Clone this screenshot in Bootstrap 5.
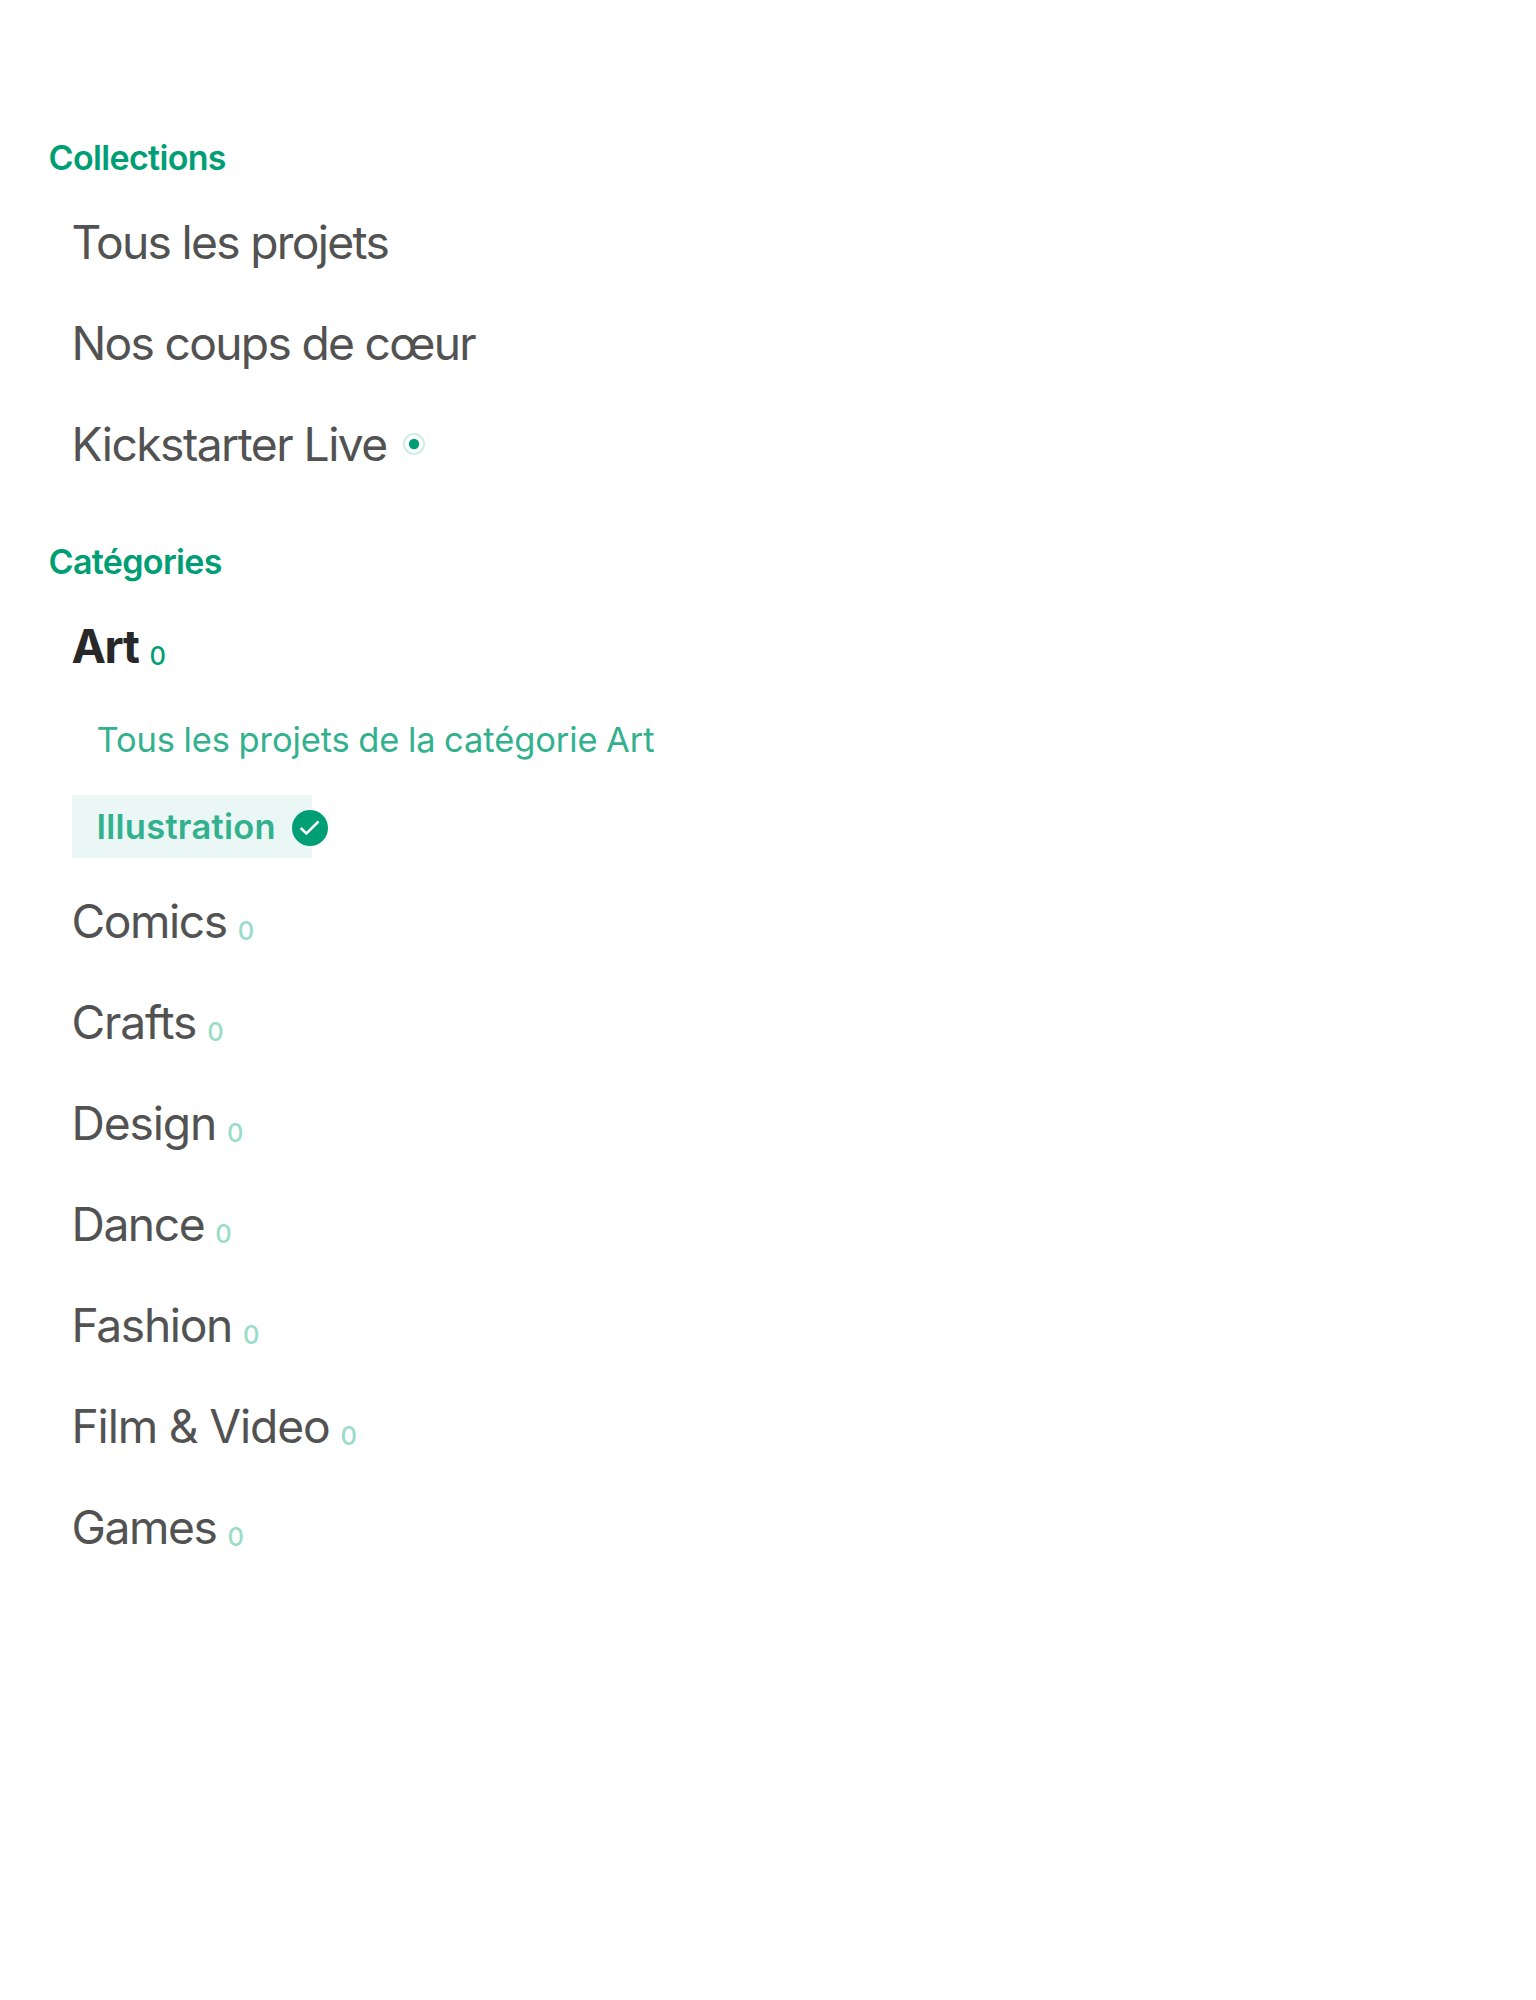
<!DOCTYPE html>
<html lang="fr">
<head>
<meta charset="utf-8">
<title>Collections</title>
<link href="https://cdn.jsdelivr.net/npm/bootstrap@5.3.0/dist/css/bootstrap.min.css" rel="stylesheet">
<style>
body { font-family: Inter, "Liberation Sans", sans-serif; color: #525252; background: #fff; }
.menu-panel { padding: 136px 48px 0 48.5px; }
.section-title { font-size: 34px; line-height: 44px; font-weight: 600; color: #009e74; margin-bottom: 12px; letter-spacing: -.65px; }
.menu-list { padding-left: 23.5px; }
.collections { padding-bottom: 45px; }
.collections .menu-item { letter-spacing: -1.7px; }
.collections .live-item { letter-spacing: -1.53px; }
.menu-item { height: 101px; font-size: 46.2px; line-height: 101px; letter-spacing: -1.35px; white-space: nowrap; text-indent: -.5px; }
.menu-item.tight { letter-spacing: -1.45px; }
.menu-item.airy { letter-spacing: -1.15px; }
.menu-item.chosen { font-weight: 700; color: #282828; letter-spacing: -1.4px; }
.count { font-size: 25.5px; font-weight: 500; line-height: 1; color: #99dcc8; letter-spacing: 0; margin-left: 11px; position: relative; top: 2px; }
.chosen .count { color: #009e74; }
.live-dot { margin: 0 0 2px 16px; }
.sub-list { padding: 11px 0 13px; gap: 24px; }
.sub-item { height: 63px; padding-left: 24.5px; font-size: 34.5px; line-height: 63px; color: #33b18f; letter-spacing: -.1px; word-spacing: -1px; white-space: nowrap; }
.sub-item.picked { width: 240px; font-weight: 600; background: #ebf7f5; letter-spacing: .25px; gap: 16.5px; }
.check-icon { margin-top: 2px; }
</style>
<script src="https://cdn.jsdelivr.net/npm/bootstrap@5.3.0/dist/js/bootstrap.bundle.min.js"></script>
</head>
<body>
<nav class="menu-panel">
  <h2 class="section-title">Collections</h2>
  <ul class="list-unstyled menu-list collections mb-0">
    <li class="menu-item">Tous les projets</li>
    <li class="menu-item">Nos coups de cœur</li>
    <li class="menu-item live-item d-flex align-items-center"><span>Kickstarter Live</span>
      <svg class="live-dot" width="22" height="22" viewBox="0 0 22 22"><circle cx="11" cy="11" r="10" fill="none" stroke="#cceee4" stroke-width="2"/><circle cx="11" cy="11" r="5.2" fill="#009e74"/></svg></li>
  </ul>
  <h2 class="section-title">Catégories</h2>
  <ul class="list-unstyled menu-list mb-0">
    <li class="menu-item chosen">Art<span class="count">0</span></li>
    <li><ul class="list-unstyled sub-list d-flex flex-column">
      <li class="sub-item">Tous les projets de la catégorie Art</li>
      <li class="sub-item picked d-flex align-items-center"><span>Illustration</span>
        <svg class="check-icon flex-shrink-0" width="36" height="36" viewBox="0 0 36 36"><circle cx="18" cy="18" r="18" fill="#009e74"/><path d="M8.700 18l5.700 5.500L26.500 11.500" fill="none" stroke="#fff" stroke-width="2.500"/></svg></li>
    </ul></li>
    <li class="menu-item tight">Comics<span class="count">0</span></li>
    <li class="menu-item airy">Crafts<span class="count">0</span></li>
    <li class="menu-item airy">Design<span class="count">0</span></li>
    <li class="menu-item tight">Dance<span class="count">0</span></li>
    <li class="menu-item">Fashion<span class="count">0</span></li>
    <li class="menu-item airy">Film &amp; Video<span class="count">0</span></li>
    <li class="menu-item tight">Games<span class="count">0</span></li>
  </ul>
</nav>
</body>
</html>
